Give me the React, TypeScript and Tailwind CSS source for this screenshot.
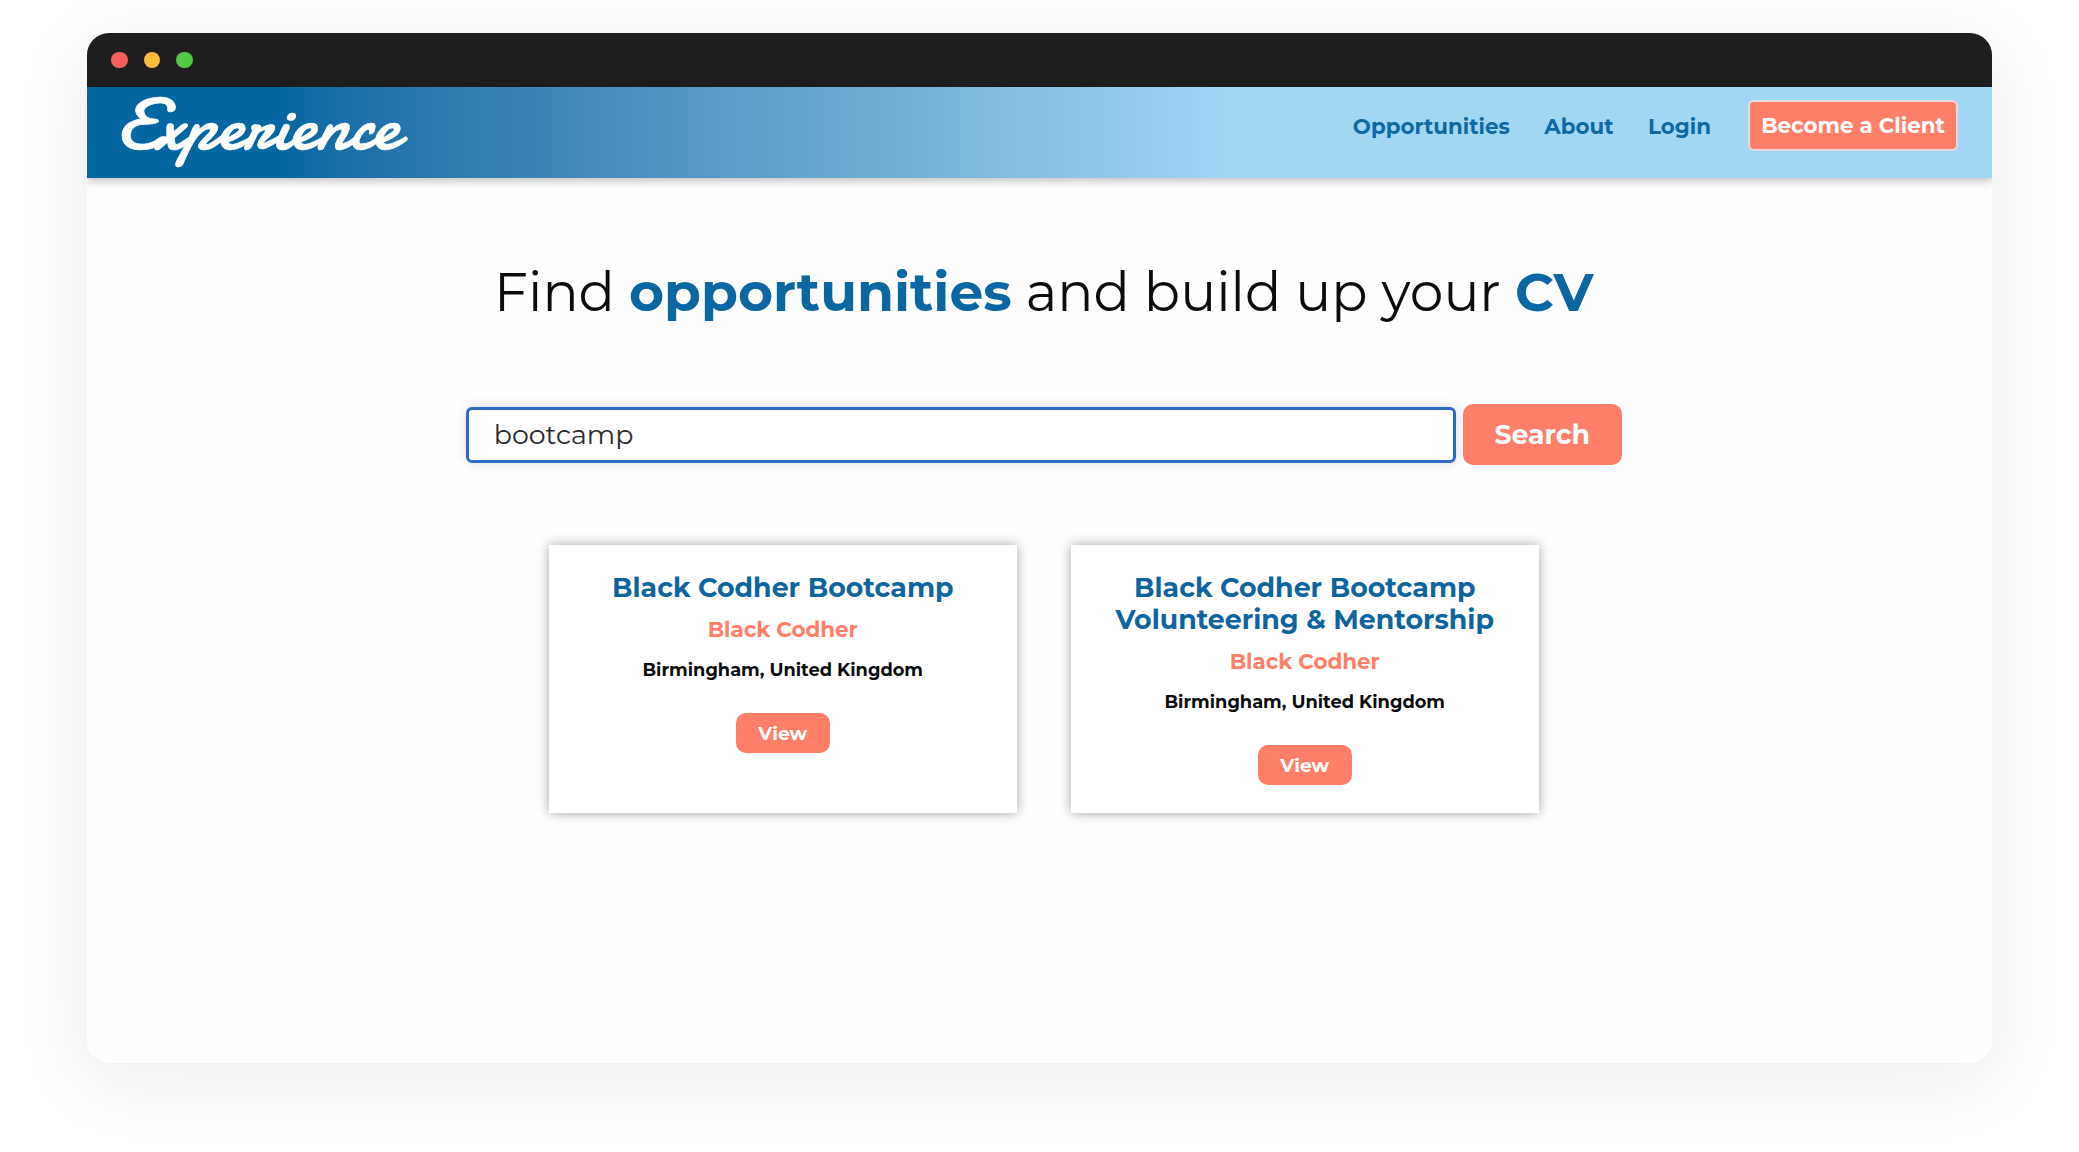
const navLinks = ["Opportunities", "About", "Login"];

const results = [
  { title: "Black Codher Bootcamp", company: "Black Codher", location: "Birmingham, United Kingdom" },
  { title: "Black Codher Bootcamp Volunteering & Mentorship", company: "Black Codher", location: "Birmingham, United Kingdom" },
];

function TitleBar() {
  return (
    <div className="flex h-[54px] items-center gap-4 bg-[#1e1e1e] pl-6">
      <span className="size-[16.5px] rounded-full bg-[#f45f5b]" />
      <span className="size-[16.5px] rounded-full bg-[#f9bd3b]" />
      <span className="size-[16.5px] rounded-full bg-[#52c845]" />
    </div>
  );
}

function Header() {
  return (
    <header className="flex h-[91px] items-start justify-between bg-linear-to-r from-[#0467a1] from-10% via-[#71aed5] via-42% to-[#a2d7f4] to-60% pr-[34px] pl-[30px] shadow-[0_3px_9px_rgba(0,0,0,0.25)]">
      <span className="font-['Damion','Lato',cursive] text-[73.4px] leading-[78px] text-white [-webkit-text-stroke:0.6px_white]">Experience</span>
      <nav className="flex items-start pt-[13px] text-[21.4px] leading-[26px] font-bold text-[#0e69a3]">
        {navLinks.map((link) => (
          <a key={link} className="mt-[13px] mr-[34.5px]">
            {link}
          </a>
        ))}
        <a className="ml-[2.5px] h-[51px] w-[210px] rounded-md border-2 border-[#e6dcdc] bg-[#ff7f69] pt-[10px] text-center whitespace-nowrap text-white">
          Become a Client
        </a>
      </nav>
    </header>
  );
}

function ResultCard({ title, company, location }: { title: string; company: string; location: string }) {
  return (
    <article className="flex h-[268px] w-[468px] flex-col items-center bg-white px-8 pt-[27px] text-center font-bold shadow-[0_0_11px_rgba(0,0,0,0.36)]">
      <h2 className="text-[26.8px] leading-8 text-[#0e659e]">{title}</h2>
      <p className="mt-3 text-[21.4px] leading-[26px] text-[#ff7f69]">{company}</p>
      <p className="mt-[17px] text-[17.8px] leading-[22px] text-[#0c0c0c]">{location}</p>
      <button className="mt-8 h-10 w-[94px] rounded-[10px] bg-[#ff7f69] pt-0.5 text-[18.8px] leading-[22px] text-white">View</button>
    </article>
  );
}

export default function App() {
  return (
    <div className="h-[1152px] overflow-hidden bg-white px-[87px] pt-[33px] font-['Montserrat','Inter',sans-serif]">
      <div className="h-[1030px] w-[1905px] overflow-hidden rounded-[22px] bg-[#fefefe] shadow-[0_16px_80px_rgba(0,0,0,0.085)]">
        <TitleBar />
        <Header />
        <main className="flex flex-col items-center pl-[8.5px]">
          <h1 className="mt-[81px] text-[53.55px] leading-[65px] whitespace-nowrap text-[#0c0c0c]">
            Find <b className="text-[#0b67a1]">opportunities</b> and build up your <b className="text-[#0b67a1]">CV</b>
          </h1>
          <form className="mt-20 flex h-[61px] items-center gap-[7px]">
            <div className="mt-px h-14 w-[990px] rounded-md border-[3px] border-[#2d6cc4] bg-white pl-[25px] text-[26.8px] leading-[50px] text-[#2a2a2a] shadow-[0_0_12px_rgba(0,0,0,0.14)]">
              bootcamp
            </div>
            <button className="h-[61px] w-[159px] rounded-[10px] bg-[#ff7f69] pt-0.5 text-[26.8px] font-bold text-white">Search</button>
          </form>
          <section className="mt-[79.5px] flex gap-[54px]">
            {results.map((item) => (
              <ResultCard key={item.title} {...item} />
            ))}
          </section>
        </main>
      </div>
    </div>
  );
}
